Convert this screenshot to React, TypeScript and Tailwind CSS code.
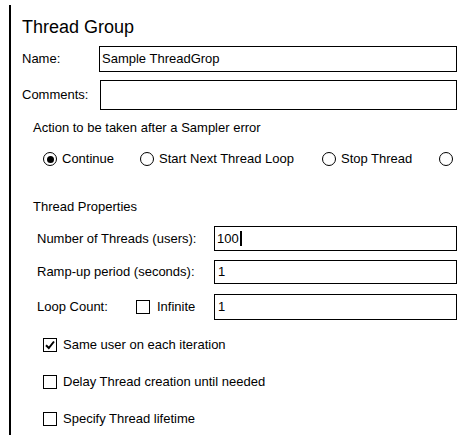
import React from "react";

function Radio({ checked, label, w }: { checked?: boolean; label?: string; w: string }) {
  return (
    <div className={`flex items-center shrink-0 ${w}`}>
      <span className="w-[14px] h-[14px] rounded-full border-[1.5px] border-black flex items-center justify-center shrink-0">
        {checked && <span className="w-[7px] h-[7px] rounded-full bg-black" />}
      </span>
      {label && <span className="ml-[5px] whitespace-nowrap">{label}</span>}
    </div>
  );
}

function Check({ checked }: { checked?: boolean }) {
  return (
    <span className="w-[14px] h-[14px] border border-black flex items-center justify-center shrink-0 bg-white">
      {checked && (
        <svg width="12" height="12" viewBox="0 0 12 12">
          <path d="M2 6.2 L4.8 9 L10 2.5" fill="none" stroke="black" strokeWidth="2" />
        </svg>
      )}
    </span>
  );
}

export default function App() {
  return (
    <div className="w-[472px] h-[435px] bg-white overflow-hidden text-[13px] leading-[16px] text-black font-['Liberation_Sans',Arial,sans-serif]">
      <div className="ml-[9px] mt-[5px] pt-[10px] h-[430px] border-l-2 border-black pl-[11px] w-[448px]">
        <div className="h-[24px] text-[18px] leading-[24px]">Thread Group</div>

        <div className="mt-[7px] flex items-center h-[26px]">
          <div className="w-[77px] shrink-0">Name:</div>
          <div className="flex-1 h-full border border-black flex items-center pl-[2px]">Sample ThreadGrop</div>
        </div>

        <div className="mt-[8px] flex items-center h-[30px]">
          <div className="w-[78px] shrink-0">Comments:</div>
          <div className="flex-1 h-full border border-black" />
        </div>

        <div className="pl-[11px]">
          <div className="mt-[10px] h-[16px]">Action to be taken after a Sampler error</div>

          <div className="mt-[15px] h-[16px] flex items-center pl-[10px] overflow-hidden w-[424px]">
            <Radio checked label="Continue" w="w-[97px]" />
            <Radio label="Start Next Thread Loop" w="w-[182px]" />
            <Radio label="Stop Thread" w="w-[117px]" />
            <Radio w="w-[20px]" />
          </div>

          <div className="mt-[32px] h-[16px]">Thread Properties</div>

          <div className="pl-[4px]">
            <div className="mt-[11px] flex items-center h-[25px]">
              <div className="w-[177px] shrink-0">Number of Threads (users):</div>
              <div className="flex-1 h-full border border-black flex items-center pl-[2px]">
                100<span className="inline-block w-[2px] h-[15px] bg-black ml-[1px]" />
              </div>
            </div>

            <div className="mt-[9px] flex items-center h-[24px]">
              <div className="w-[177px] shrink-0">Ramp-up period (seconds):</div>
              <div className="flex-1 h-full border border-black flex items-center pl-[3px]">1</div>
            </div>

            <div className="mt-[10px] flex items-center h-[26px]">
              <div className="w-[99px] shrink-0">Loop Count:</div>
              <Check />
              <div className="w-[64px] shrink-0 pl-[7px]">Infinite</div>
              <div className="flex-1 h-full border border-black flex items-center pl-[3px]">1</div>
            </div>
          </div>

          <div className="pl-[10px]">
            <div className="mt-[17px] h-[16px] flex items-center">
              <Check checked />
              <span className="ml-[6px]">Same user on each iteration</span>
            </div>
            <div className="mt-[21px] h-[16px] flex items-center">
              <Check />
              <span className="ml-[6px]">Delay Thread creation until needed</span>
            </div>
            <div className="mt-[21px] h-[16px] flex items-center">
              <Check />
              <span className="ml-[6px]">Specify Thread lifetime</span>
            </div>
          </div>
        </div>
      </div>
    </div>
  );
}
